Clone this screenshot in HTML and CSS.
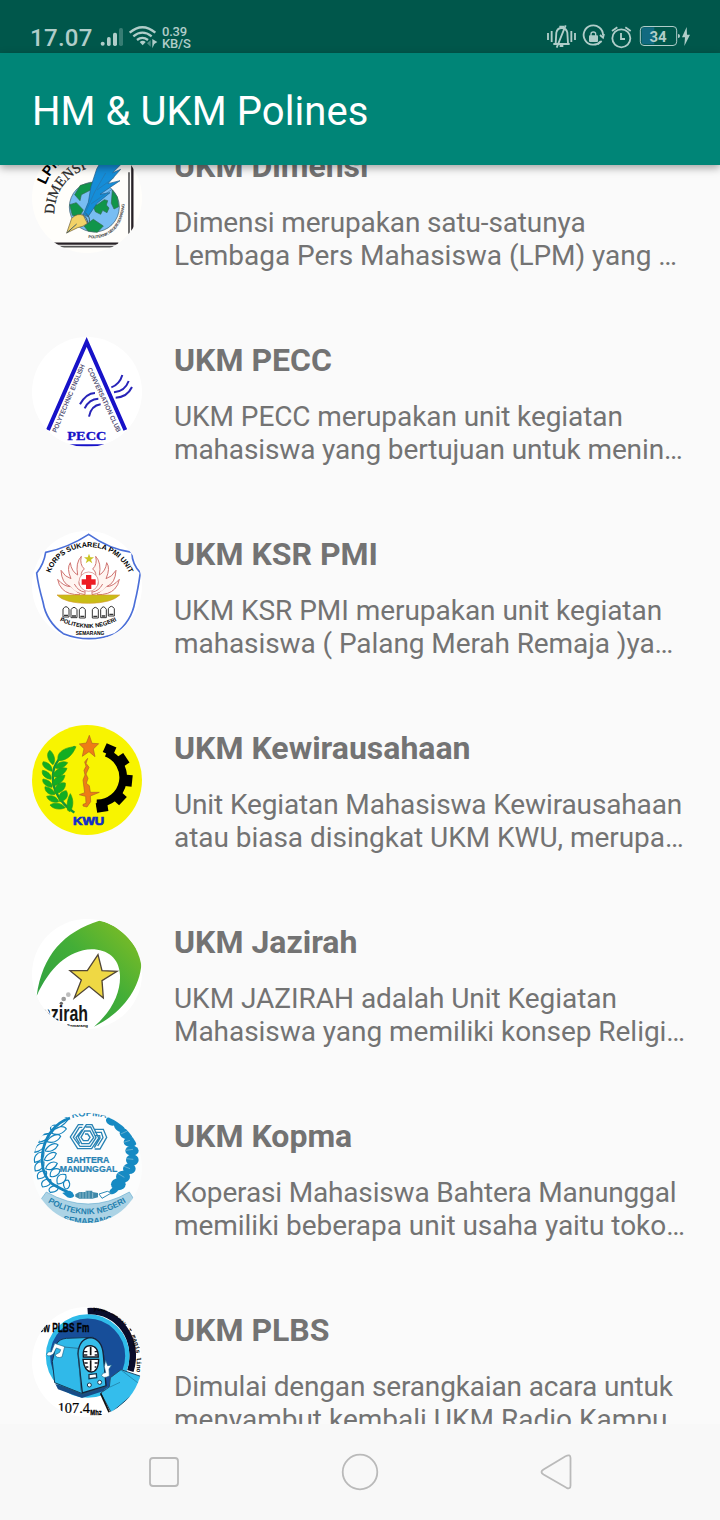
FILE: index.html
```html
<!DOCTYPE html>
<html lang="id">
<head>
<meta charset="utf-8">
<title>HM &amp; UKM Polines</title>
<link rel="stylesheet" href="styles.css">
</head>
<body>
<div class="screen">
  <div class="status">
    <span class="time">17.07</span>
    <svg class="signal" viewBox="300 0 72 159"><g fill="#b0cdc9"><circle cx="308" cy="131" r="6"/><rect x="321" y="111" width="11" height="27" rx="5"/><rect x="339" y="98" width="12" height="40" rx="5"/></g><rect x="357" y="84" width="12" height="54" rx="5" fill="#377d73"/></svg>
    <svg class="wifi" viewBox="384 0 93 159"><g fill="none" stroke="#b0cdc9" stroke-width="7"><path d="M389 98Q427 65 466 98"/><path d="M400 109Q427 87 455 109"/><path d="M411 120Q427 107 444 120"/></g><path d="M419 126Q428 119 437 126L428 136Z" fill="#b0cdc9"/><path d="M452 120V140L441 130Z" fill="#4d8c83"/><path d="M457 117L472 126L463 132L457 145Z" fill="#b0cdc9"/></svg>
    <span class="speed">0.39<br>KB/S</span>
    <svg class="indicators" viewBox="60 0 480 159">
      <g fill="none" stroke="#b0cdc9" stroke-width="5.500">
        <path d="M84 99V120M95 93V126M154 93V126M165 99V120"/>
        <path d="M100 132H149M107 130L109 98Q112 84 125 84Q139 84 142 98L144 130M118 80H132M137 76L110 143M119 138H130"/>
        <path d="M242 124A29 29 0 1 1 249 106"/><path d="M240 105L249 113L252 102M233 133L245 123"/>
        <path d="M213 108V102Q213 96 220 96Q227 96 227 102V108" stroke-width="4"/>
        <circle cx="304" cy="115" r="27"/><path d="M303 99V117H315M276 93L292 82M332 93L316 82"/>
      </g>
      <rect x="207" y="106" width="27" height="20" rx="3" fill="#b0cdc9"/>
      <path d="M372 82H403V133H372Q365 133 365 126V89Q365 82 372 82Z" fill="#116a80"/>
      <rect x="361" y="79.500" width="109" height="57" rx="11" fill="none" stroke="#b0cdc9" stroke-width="3"/>
      <path d="M474 102Q480 102 480 108Q480 114 474 114ZM500 81L486 112H495L493 138L510 104H501Z" fill="#b0cdc9"/>
      <text class="charge" x="414" y="125" text-anchor="middle">34</text>
    </svg>
  </div>
  <header class="appbar">HM &amp; UKM Polines</header>
  <main class="list">
    <article class="row">
      <svg class="logo" viewBox="36 -36 330 330">
        <defs><path id="lpm" d="M77 90Q92 48 139 10"/><path id="dim" d="M103 178C103 110 145 42 245 31"/><path id="dimr" d="M205 249C265 255 313 220 314 135"/></defs>
        <rect x="36" y="-36" width="330" height="330" fill="#fffefb"/>
        <path d="M327 52V236M112 275H300" stroke="#555" stroke-width="5"/><path d="M337 -20V240M100 266H295" stroke="#272126" stroke-width="7"/>
        <circle cx="223" cy="156" r="75" fill="#78bdf3" stroke="#35576a" stroke-width="2"/>
        <path d="M164 119L181 91L218 82L210 106L184 119L180 137ZM149 149L169 143L190 165L177 187L157 181ZM192 213L220 193L250 213L232 232L204 228ZM277 105L292 126L296 155L282 162L274 145ZM215 143L231 150L242 142L253 134L263 137L259 150L267 159L261 173L248 166L242 178L226 170L221 156Z" fill="#10954a" stroke="#356950" stroke-width="2"/>
        <path d="M190 178L205 142L213 94L230 42L262 -15L275 12L306 25L278 53L302 43L264 86L300 77L240 118L270 113L231 145L204 185Z" fill="#158dd8" stroke="#235e88" stroke-width="2"/>
        <path d="M196 173L224 111L257 54M213 147L276 103M231 105L283 67" fill="none" stroke="#2876a9" stroke-width="2"/>
        <path d="M140 234L155 190Q172 173 190 181L202 205Q190 216 173 218Z" fill="#f2d268" stroke="#665b39" stroke-width="2"/><path d="M140 234L170 207M187 177Q202 187 204 207M196 174Q211 184 208 201" fill="none" stroke="#435d67" stroke-width="3"/>
        <text class="sans bold" font-size="43"><textPath href="#lpm">LPM</textPath></text>
        <text class="serif" font-size="43" fill="#292929" stroke="#292929" stroke-width=".8"><textPath href="#dim">DIMENSI</textPath></text>
        <text class="sans bold" font-size="12" fill="#444"><textPath href="#dimr" textLength="170">POLITEKNIK NEGERI SEMARANG</textPath></text>
      </svg>
      <div class="copy"><h2>UKM Dimensi</h2><p><span class="snug">Dimensi merupakan satu-satunya</span><br><span class="close">Lembaga Pers Mahasiswa (LPM) yang …</span></p></div>
    </article>
    <article class="row">
      <svg class="logo" viewBox="36 36 330 330">
        <rect x="36" y="36" width="330" height="330" fill="#fff"/>
        <path d="M84 315L200 51L316 315" fill="none" stroke="#1712c8" stroke-width="12"/>
        <path d="M140 361H265" stroke="#1712c8" stroke-width="6"/>
        <g fill="none" stroke="#2824b8" stroke-width="6"><path d="M180 238Q198 205 225 204M194 250Q207 222 235 221M207 275Q213 242 242 238M307 150Q299 178 274 187M326 168Q315 199 282 202M336 186Q321 217 287 218"/></g>
        <text class="serif bold" x="142" y="344" font-size="40" textLength="117" lengthAdjust="spacingAndGlyphs" fill="#1712c8" stroke="#1712c8">PECC</text>
        <g class="sans bold" fill="#555275" font-size="20"><text transform="translate(109 324) rotate(-67)" textLength="220" lengthAdjust="spacingAndGlyphs">POLYTECHNIC ENGLISH</text><text transform="translate(202 132) rotate(65)" textLength="211" lengthAdjust="spacingAndGlyphs">CONVERSATION CLUB</text></g>
      </svg>
      <div class="copy"><h2>UKM PECC</h2><p><span class="near">UKM PECC merupakan unit kegiatan</span><br><span class="snug">mahasiswa yang bertujuan untuk menin…</span></p></div>
    </article>
    <article class="row">
      <svg class="logo" viewBox="36 33 330 330">
        <defs><path id="korps" d="M84 184C107 48 302 46 336 184"/><path id="polik" d="M103 293Q205 355 306 293"/></defs>
        <rect x="36" y="33" width="330" height="330" fill="#fff"/>
        <path d="M206 43Q269 88 336 97Q335 130 361 158Q354 209 345 244Q335 305 285 341Q207 371 130 341Q79 306 69 246Q54 193 50 159Q72 131 77 97Q145 83 206 43Z" fill="none" stroke="#4b6fd8" stroke-width="5"/>
        <text class="sans bold" font-size="21.500" text-anchor="middle"><textPath href="#korps" startOffset="50%">KORPS SUKARELA PMI UNIT</textPath></text>
        <path d="M207 101L211 112L222 112L213 119L217 130L207 123L197 130L201 119L192 112L203 112Z" fill="#cbc526"/>
        <g fill="#fff5f1" stroke="#cf7471" stroke-width="3"><path d="M195 224Q165 220 150 199Q125 190 123 151Q136 172 153 176Q139 145 151 128Q154 154 173 165Q166 128 184 109Q178 133 193 147Q178 158 187 177Q174 181 178 195Q184 205 195 201Z"/><path d="M180 224Q144 225 127 207Q116 196 113 178Q131 199 151 200M194 216Q175 214 163 192"/></g>
        <g transform="matrix(-1 0 0 1 411 0)" fill="#fff5f1" stroke="#cf7471" stroke-width="3"><path d="M195 224Q165 220 150 199Q125 190 123 151Q136 172 153 176Q139 145 151 128Q154 154 173 165Q166 128 184 109Q178 133 193 147Q178 158 187 177Q174 181 178 195Q184 205 195 201Z"/><path d="M180 224Q144 225 127 207Q116 196 113 178Q131 199 151 200M194 216Q175 214 163 192"/></g>
        <circle cx="206" cy="185" r="29" fill="#fff" stroke="#cf7471" stroke-width="2"/><path d="M198 165H214V178H227V194H214V207H198V194H185V178H198Z" fill="#ed1c24"/>
        <path d="M111 225H299Q276 249 206 250Q134 250 111 225Z" fill="#c9bd16" stroke="#d69b32" stroke-width="2"/>
        <g fill="#fff" stroke="#353535" stroke-width="3"><path d="M129 291V267Q138 253 147 267V291ZM153 293V269Q162 255 171 269V293ZM178 294V269Q187 255 196 269V294ZM217 294V269Q226 255 235 269V294ZM242 293V268Q250 253 259 268V293ZM265 288V266Q274 252 283 266V288Z"/><path d="M132 286H144M156 288H168M181 289H193M220 289H232M245 288H256M268 283H280" stroke-width="4"/></g>
        <text class="sans bold" font-size="17.500" text-anchor="middle"><textPath href="#polik" startOffset="50%">POLITEKNIK NEGERI</textPath></text><text class="sans bold" x="167" y="346" font-size="16" textLength="86" lengthAdjust="spacingAndGlyphs">SEMARANG</text>
      </svg>
      <div class="copy"><h2>UKM KSR PMI</h2><p><span class="close">UKM KSR PMI merupakan unit kegiatan</span><br><span class="near">mahasiswa ( Palang Merah Remaja )ya…</span></p></div>
    </article>
    <article class="row">
      <svg class="logo" viewBox="36 30 330 330">
        <rect x="36" y="30" width="330" height="330" fill="#f8f400"/>
        <path d="M163 293Q89 240 100 170Q106 127 165 95" fill="none" stroke="#12933c" stroke-width="7"/>
        <g fill="#12ae22" stroke="#2d9a20" stroke-width="2"><path d="M115 137C107 113 134 96 168 95C158 118 143 137 115 137ZM105 158C111 142 130 136 143 143C134 158 117 165 105 158ZM98 184C102 166 121 154 141 160C135 177 116 191 98 184ZM97 211C98 190 116 178 135 181C131 199 116 214 97 211ZM104 236C102 213 117 200 136 204C139 220 124 235 104 236ZM119 260C111 244 122 228 139 227C149 243 136 259 119 260ZM143 286C138 266 146 244 151 236C163 257 159 278 150 290ZM99 149C81 136 78 114 90 106C104 119 108 138 99 149ZM96 169C73 163 63 148 70 140C87 142 98 155 96 169ZM93 193C73 190 63 176 68 166C85 169 96 181 93 193ZM96 217C76 216 65 201 69 192C89 195 99 207 96 217ZM104 239C84 242 73 226 75 215C94 218 105 228 104 239ZM116 260C98 266 83 255 80 244C96 239 112 246 116 260ZM136 278C120 286 98 282 90 270C106 259 127 266 136 278Z"/></g>
        <path d="M208 61L216 85L236 86L220 102L225 125L207 110L187 124L192 101L178 87L199 84Z" fill="#ee7c15" stroke="#ad6425" stroke-width="2"/>
        <path d="M203 130L198 145L207 157L198 177L204 190L199 205L208 212L211 232H238L211 243L212 260L201 276L189 273V268L198 265L197 244L178 239L194 233L189 195L195 180L192 166L198 154L194 141Z" fill="#ee7c15" stroke="#ad6425" stroke-width="2"/>
        <path d="M259 114A78 78 0 0 1 230 265" fill="none" stroke="#000" stroke-width="23"/>
        <g transform="translate(232 187)"><rect x="76" y="-16" width="29" height="32" transform="rotate(-66)"/><rect x="78" y="-17" width="27" height="34" transform="rotate(-34)"/><rect x="78" y="-17" width="27" height="34" transform="rotate(6)"/><rect x="78" y="-17" width="27" height="34" transform="rotate(43)"/><rect x="76" y="-17" width="29" height="34" transform="rotate(81)"/></g>
        <text class="sans bold" x="159" y="329" font-size="34" textLength="94" lengthAdjust="spacingAndGlyphs" fill="#102dc7" stroke="#102dc7" stroke-width="2">KWU</text>
      </svg>
      <div class="copy"><h2>UKM Kewirausahaan</h2><p><span class="snug">Unit Kegiatan Mahasiswa Kewirausahaan</span><br><span class="close">atau biasa disingkat UKM KWU, merupa…</span></p></div>
    </article>
    <article class="row">
      <svg class="logo" viewBox="36 33 330 330">
        <defs><linearGradient id="leaf" x1="0" y1="1" x2="1" y2="0"><stop stop-color="#299c47"/><stop offset=".55" stop-color="#43ae37"/><stop offset="1" stop-color="#89bf22"/></linearGradient></defs>
        <rect x="36" y="33" width="330" height="330" fill="#fff"/>
        <path d="M50 264C67 139 132 72 238 38C286 46 337 91 365 149C367 240 304 317 222 356C276 309 302 254 300 202C298 150 262 124 215 124C145 126 88 180 50 264Z" fill="url(#leaf)"/>
        <path d="M234 140L246 188L291 190L246 218L250 270L207 235L163 270L184 216L150 188L202 188Z" fill="#efd844" stroke="#514637" stroke-width="4"/>
        <circle cx="145" cy="260" r="7" fill="#bdbdbd"/><circle cx="131" cy="273" r="7" fill="#9c9c9c"/><circle cx="124" cy="286" r="5" fill="#666"/>
        <text class="sans bold" x="66" y="340" font-size="66" textLength="138" lengthAdjust="spacingAndGlyphs" fill="#151515">azirah</text><path d="M36 275H70L91 320V345H36Z" fill="#fff"/>
        <text class="sans bold" x="141" y="358" font-size="12" textLength="63" lengthAdjust="spacingAndGlyphs">Semarang</text>
      </svg>
      <div class="copy"><h2>UKM Jazirah</h2><p><span class="close">UKM JAZIRAH adalah Unit Kegiatan</span><br><span class="close">Mahasiswa yang memiliki konsep Religi…</span></p></div>
    </article>
    <article class="row">
      <svg class="logo" viewBox="36 33 330 330">
        <defs><path id="kopma" d="M148 50Q207 34 267 50"/><path id="polk" d="M72 293Q200 380 330 293"/><path id="semk" d="M107 353Q200 380 300 353"/></defs>
        <rect x="36" y="33" width="330" height="330" fill="#fcfdfd"/>
        <text class="sans bold" font-size="28" fill="#2889bc" text-anchor="middle"><textPath href="#kopma" startOffset="50%">KOPMA</textPath></text>
        <g fill="none" stroke="#1584bd"><path d="M150 48C56 78 43 215 102 249Q130 265 157 276" stroke-width="8"/><g stroke-width="3.500"><path d="M147 50C112 32 88 70 92 83C113 83 134 67 147 50ZM111 70C78 65 64 86 67 99C86 98 103 86 111 70ZM90 96C65 91 54 109 56 121C73 118 86 111 90 96ZM76 124C54 121 42 137 44 151C61 147 73 139 76 124ZM72 152C51 146 40 166 44 181C62 177 73 166 72 152ZM72 180C50 176 41 190 46 207C65 205 74 194 72 180ZM79 208C58 203 48 216 54 231C74 229 83 220 79 208ZM92 233C72 228 59 241 68 255C86 254 96 244 92 233ZM112 250C91 251 81 262 91 271C111 271 119 260 112 250ZM95 94C109 69 134 71 139 81C127 96 111 101 95 94ZM80 119C93 98 116 93 122 103C113 120 96 124 80 119ZM75 147C85 127 106 120 114 129C107 145 89 151 75 147ZM73 174C80 153 101 147 109 155C103 172 88 179 73 174ZM77 200C83 180 103 176 112 184C105 202 89 207 77 200ZM91 223C88 204 106 195 120 203C119 219 103 227 91 223ZM112 245C107 224 119 213 137 218C142 234 127 248 112 245ZM136 261C125 245 132 232 145 235C154 248 146 262 136 261Z"/></g></g>
        <path d="M148 266Q158 268 163 282Q155 292 142 286L127 273Z" fill="#188bc4"/>
        <g fill="#168ac3"><ellipse cx="274" cy="58" rx="17" ry="12" transform="rotate(25 274 58)"/><ellipse cx="298" cy="74" rx="19" ry="13" transform="rotate(45 298 74)"/><ellipse cx="318" cy="96" rx="20" ry="15" transform="rotate(25 318 96)"/><ellipse cx="331" cy="120" rx="20" ry="15"/><ellipse cx="336" cy="146" rx="20" ry="15"/><ellipse cx="337" cy="174" rx="19" ry="17"/><ellipse cx="328" cy="200" rx="19" ry="16"/><ellipse cx="309" cy="224" rx="21" ry="18"/><ellipse cx="295" cy="247" rx="22" ry="18"/><ellipse cx="282" cy="265" rx="16" ry="9" transform="rotate(-35 282 265)"/></g><g fill="none" stroke="#8bc1da" stroke-width="2"><path d="M302 96L322 87M311 121L330 115M318 145L339 142M319 170L340 172M312 193L330 200M293 214L313 226"/></g>
        <g fill="none" stroke="#2883b4" stroke-width="4"><path d="M190 68H175L151 105L173 140H215L236 108L216 68H199L175 105L185 125H207L221 107L210 87H194L183 106L190 116H204L210 106L203 96H195M197 75H212L228 107L211 133H180L160 106L178 76H187M187 83L168 107L179 125M224 82H250L260 106L240 141H224M224 91H244L249 107L233 132M224 101H239L240 108L223 137"/></g>
        <g class="sans bold" fill="#2883b4" stroke="#2883b4" stroke-width=".7"><text x="140" y="182" font-size="25" textLength="128" lengthAdjust="spacingAndGlyphs">BAHTERA</text><text x="119" y="210" font-size="25" textLength="173" lengthAdjust="spacingAndGlyphs">MANUNGGAL</text></g>
        <path d="M166 277L178 270H197V266H217V270L234 273V286L217 290H178L166 284Z" fill="#3e89a9"/><path d="M180 271V288M189 270V290M198 267V290M207 268V290M218 272V288" stroke="#b6d5df" stroke-width="2"/><path d="M237 276L262 268L274 273L246 289Z" fill="#fff" stroke="#2c8bb7" stroke-width="3"/>
        <path d="M79 270Q205 342 328 270L340 289Q319 349 267 363H130Q85 341 63 292Z" fill="#acd3e5" stroke="#68add0" stroke-width="2"/><g class="sans bold" fill="#237fae" text-anchor="middle"><text font-size="24.500"><textPath href="#polk" startOffset="50%">POLITEKNIK NEGERI</textPath></text><text font-size="26"><textPath href="#semk" startOffset="50%">SEMARANG</textPath></text></g>
      </svg>
      <div class="copy"><h2>UKM Kopma</h2><p><span class="tight">Koperasi Mahasiswa Bahtera Manunggal</span><br><span class="close">memiliki beberapa unit usaha yaitu toko…</span></p></div>
    </article>
    <article class="row">
      <svg class="logo" viewBox="36 33 330 330">
        <defs><path id="musik" d="M220 43C303 44 365 112 347 250"/></defs>
        <rect x="36" y="33" width="330" height="330" fill="#fff"/>
        <path d="M203 46C294 39 361 132 331 225" fill="none" stroke="#0a0c2a" stroke-width="20"/>
        <circle cx="203" cy="180" r="119" fill="#174e99" stroke="#2fbbe9" stroke-width="13"/>
        <text class="mono bold" font-size="19"><textPath href="#musik" textLength="258">your music + magis lino</textPath></text>
        <path d="M106 264L186 289L262 264L251 285L186 306L114 280Z" fill="#174c87"/>
        <path d="M109 145Q117 129 139 127L218 124Q246 139 251 179L258 270L187 293L104 260L97 196Z" fill="#30b9e9" stroke="#153855" stroke-width="3"/><path d="M187 291L174 173Q177 129 211 125Q246 129 250 176L258 270Z" fill="#35bdea" stroke="#15243e" stroke-width="4"/>
        <path d="M111 151L174 157L183 284M126 270L188 295L263 270" fill="none" stroke="#245b77" stroke-width="2"/>
        <path d="M190 183Q187 149 210 149Q235 150 235 183Z" fill="#fff" stroke="#171923" stroke-width="4"/><path d="M189 190H236Q235 228 214 228Q193 226 189 190Z" fill="#fff" stroke="#171923" stroke-width="4"/><path d="M192 167H202M224 167H233M192 177H202M224 177H233M193 201H203M224 201H233M198 213H205M224 213H229" stroke="#171923" stroke-width="4"/><path d="M212 152V178M212 193V224" stroke="#111" stroke-width="5"/>
        <path d="M207 236L229 233L230 245L207 248Z" fill="#fff" stroke="#173850" stroke-width="4"/><g fill="#fff" stroke="#173850" stroke-width="3"><circle cx="208" cy="267" r="6"/><circle cx="239" cy="259" r="6"/></g>
        <path d="M104 142L134 152L126 183Q110 188 105 177L119 169L122 161L109 156L100 174Q84 185 80 175Q83 165 94 168ZM257 193L263 209L275 207L267 219L268 240Q251 249 245 239Q246 229 257 230L253 212Z" fill="#fff" stroke="#16668c" stroke-width="2"/>
        <path d="M242 291L268 273L271 245L303 221L362 241L352 284L274 350Z" fill="#34bdec" stroke="#244d6b" stroke-width="3"/><path d="M242 292L268 350" stroke="#111" stroke-width="5"/><path d="M268 274L300 259M303 222L353 260" stroke="#268eb5" stroke-width="3"/>
        <text class="sans bold" x="38" y="108" font-size="39" textLength="170" lengthAdjust="spacingAndGlyphs" stroke="#000" stroke-width="1">New PLBS Fm</text>
        <text class="serif" x="113" y="350" font-size="43" textLength="97" lengthAdjust="spacingAndGlyphs" stroke="#000" stroke-width=".7">107.4</text><text class="sans bold" x="211" y="357" font-size="23" textLength="34" lengthAdjust="spacingAndGlyphs" stroke="#000">Mhz</text>
      </svg>
      <div class="copy"><h2>UKM PLBS</h2><p><span class="tight">Dimulai dengan serangkaian acara untuk</span><br>menyambut kembali UKM Radio Kampu…</p></div>
    </article>
  </main>
  <nav class="nav">
    <svg viewBox="0 0 40 40"><rect x="6" y="6" width="28" height="28" rx="3"/></svg>
    <svg viewBox="0 0 40 40"><circle cx="20" cy="20" r="17.300"/></svg>
    <svg viewBox="0 0 40 40"><path d="M7.500 17.500L29.500 4.200Q34.500 1.800 34.500 6V33.500Q34.500 37.500 30.500 35.800L7.500 22.500Q3.500 20 7.500 17.500Z"/></svg>
  </nav>
</div>
</body>
</html>
```
FILE: styles.css
```css
* { box-sizing: border-box; }
body { margin: 0; background: #fafafa; font-family: Roboto, sans-serif; }
.screen { width: 720px; height: 1520px; display: flex; flex-direction: column; overflow: hidden; }
.status { flex: none; height: 53px; display: flex; align-items: flex-end; padding: 0 20px 0 30px; background: #00574b; color: #b0cdc9; }
.status svg { height: 53px; flex: none; }
.time { width: 70px; font-size: 24px; line-height: 28px; margin-bottom: 1px; letter-spacing: .3px; font-weight: 500; }
.signal { width: 24px; margin-right: 4px; }
.wifi { width: 31px; margin-right: 3px; }
.speed { font-size: 13px; line-height: 12px; margin-bottom: 3px; font-weight: 500; letter-spacing: -.2px; }
.indicators { width: 160px; margin-left: auto; }
.charge { font: bold 45px Roboto, sans-serif; fill: #b0cdc9; }
.appbar { flex: none; height: 112px; padding-left: 32px; line-height: 117px; font-size: 40px; letter-spacing: .07px; color: #fff; background: #008577; position: relative; z-index: 1; box-shadow: 0 3px 8px rgba(0, 0, 0, .35); }
.list { flex: 1; min-height: 0; overflow: hidden; }
.row { height: 194px; display: flex; gap: 32px; padding: 16px 32px; }
.row:first-child { margin-top: -38px; }
.logo { flex: none; width: 110px; height: 110px; border-radius: 50%; overflow: hidden; }
.copy { padding-top: 4px; color: #737373; white-space: nowrap; }
.copy h2 { margin: 0 0 21px; font-size: 32px; line-height: 38px; font-weight: 700; }
.copy p { margin: 0; font-size: 28px; line-height: 33px; }
.close { letter-spacing: -.04px; }
.near { letter-spacing: -.08px; }
.snug { letter-spacing: -.13px; }
.tight { letter-spacing: -.16px; }
.nav { flex: none; height: 96px; display: flex; align-items: center; gap: 156px; padding-left: 144px; background: #f8f8f8; }
.nav svg { width: 40px; height: 40px; fill: none; stroke: #bababa; stroke-width: 1.8; }
.sans { font-family: "Liberation Sans", sans-serif; }
.serif { font-family: "Liberation Serif", serif; }
.mono { font-family: "Liberation Mono", monospace; }
.bold { font-weight: 700; }
```
